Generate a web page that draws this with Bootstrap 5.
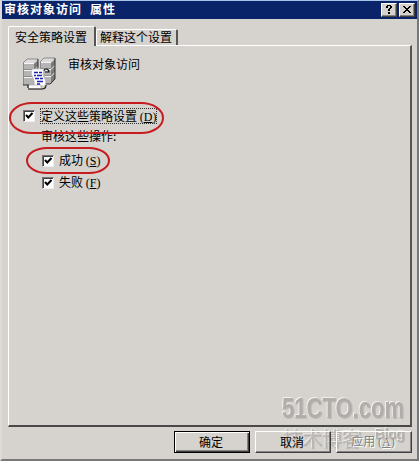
<!DOCTYPE html>
<html lang="zh-CN">
<head>
<meta charset="utf-8">
<title>审核对象访问 属性</title>
<link href="https://cdn.jsdelivr.net/npm/bootstrap@5.3.0/dist/css/bootstrap.min.css" rel="stylesheet">
<style>
body{margin:0;overflow:hidden;background:#d6d3ce;color:#000;font:12px/14px "Noto Sans CJK SC",sans-serif}
.dialog-window{width:419px;height:461px;background:#d6d3ce;border:solid;border-width:1px 2px 2px 2px;border-color:#a9c3e8 #777 #7b7978 #dedbd6;padding:0 1px}
.caption-bar{height:18px;background:#0a246a;color:#fff;font-weight:700;letter-spacing:1px;padding:0 2px 0 2px;margin:0 -1px}
.caption-text{margin-top:-2px}
.caption-btn{width:16px;height:14px;background:#d6d3ce;border:1px solid;border-color:#fff #404040 #404040 #fff;box-shadow:inset -1px -1px #848284;padding:0;margin-left:2px}
.caption-btn svg{display:block}
.tab-strip{height:19px;margin:7px 0 0 5px}
.sheet-tab{border:solid;border-width:1px 2px 0 1px;border-color:#fff #555 #555 #fff;border-radius:2px 2px 0 0;padding:0;background:#d6d3ce;color:#000}
.tab-on{width:88px;height:20px;padding:1px 0 1px 6px;z-index:2}
.tab-off{width:82px;height:16px;margin-top:3px;padding:0 0 1px 3px}
.sheet{width:404px;height:382px;margin-left:5px;border:solid;border-width:1px 2px 2px 1px;border-color:#fff #555 #4b484a #fff;padding:11px 0 0 14px}
.server-icon{width:34px;height:34px}
.heading-text{margin:0 0 0 11px}
.check-box{width:12px;height:12px;background:#fff;border:1px solid;border-color:#777 #eee #eee #777;box-shadow:inset 1px 1px #404040;flex:none}
.check-box svg{display:block}
.key{font-family:"Liberation Serif",serif;font-size:12px;white-space:nowrap}
.dotted{border:1px dotted #333;margin-left:-1px;height:16px;line-height:13px}
.policy-row{height:22px;gap:6px;align-items:center}
.first-row{margin-top:14px}
.policy-note{margin:2px 0 7px 18px;height:14px}
.sub-row{margin-left:19px}
.sub-row>span{margin:-1px 0 0 -1px}
.dlg-btn{width:76px;height:22px;background:transparent;border:1px solid;border-color:#fff #404040 #404040 #fff;box-shadow:inset -1px -1px #848284;color:#000;padding:0 2px 1px 0}
.dlg-default{border-color:#000;box-shadow:inset 1px 1px #fff,inset -1px -1px #404040,inset -2px -2px #848284}
.dlg-off{color:#848284;text-shadow:1px 1px #fff}
.footer-row{gap:5px;margin:4px 4px 0 0;z-index:3}
.overlay{left:0;top:0;pointer-events:none}
.marks{z-index:5}
.stamp{filter:drop-shadow(-1px -1px 0 #f1efec) drop-shadow(1px 1px 0 #bebbb8)}
</style>
<script src="https://cdn.jsdelivr.net/npm/bootstrap@5.3.0/dist/js/bootstrap.bundle.min.js"></script>
</head>
<body>
<main class="dialog-window position-relative">
  <header class="caption-bar d-flex align-items-center">
    <span class="caption-text me-auto">审核对象访问<span class="ms-2">属性</span></span>
    <button class="caption-btn" aria-label="帮助"><svg width="14" height="12" shape-rendering="crispEdges"><path d="M4 2h2v2H4zM5 1h4v1H5zM8 2h2v2H8zM7 4h2v1H7zM6 5h2v2H6zM6 8h2v2H6z"/></svg></button>
    <button class="caption-btn" aria-label="关闭"><svg width="14" height="12" shape-rendering="crispEdges"><path d="M3 2h2v1H3zM9 2h2v1H9zM4 3h2v1H4zM8 3h2v1H8zM5 4h4v1H5zM6 5h2v1H6zM5 6h4v1H5zM4 7h2v1H4zM8 7h2v1H8zM3 8h2v1H3zM9 8h2v1H9z"/></svg></button>
  </header>
  <nav class="tab-strip d-flex align-items-start">
    <button class="sheet-tab tab-on position-relative text-start">安全策略设置</button>
    <button class="sheet-tab tab-off text-start">解释这个设置</button>
  </nav>
  <section class="sheet">
    <div class="d-flex align-items-start">
      <svg class="server-icon" viewBox="0 0 34 34">
        <path d="M0 6h11v22H0zM17 5h11v22H17z" fill="#b5b3b3"/>
        <path d="M0 6l4-4h11l-4 4zM17 5l4-4h11l-4 4z" fill="#dddbdb"/>
        <path d="M11 6l4-4v20l-4 5zM28 5l4-4v21l-4 5z" fill="#7c7a7a"/>
        <path d="M0 6.5h11l4-4M0 13.5h11l4-4M0 20.5h9M17 5.5h11l4-4M17 12.5h11l4-4M22 19.5h6l4-4" stroke="#f5f5f5" fill="none"/>
        <path d="M0 12.5h11M0 19.5h9M17 11.5h11M22 18.5h6M.5 6v22M0 6l4-4h11M17 5l4-4h11M17.5 5v8" stroke="#8c8a8a" fill="none"/>
        <path d="M32 1v21l-5 5h-4M15 2v9M0 28h6" stroke="#333" fill="none"/>
        <path d="M9 12h14q2 0 2 2h-4q-2 2 0 6 3 5 1 9H11q1-4-1-8-3-5-1-9z" fill="#fff" stroke="#aaa" stroke-width=".6"/>
        <path d="M6 28h12q-1 2 1 4H6q-2-2 0-4z" fill="#fff" stroke="#999" stroke-width=".6"/>
        <path d="M21 14q0-2 2-2 3 0 3 3h-4M5 32h14q4 0 4-4M5 28v3" fill="none" stroke="#111" stroke-width="1.1"/>
        <path d="M11 15.5h4M16 15.5h3M11 18.5h2M14 18.5h5M12 21.5h4M17 21.5h3M14 24.5h6M14 27h3" stroke="#1d20b8" stroke-width="1.3" fill="none"/>
      </svg>
      <span class="heading-text">审核对象访问</span>
    </div>
    <div>
      <label class="policy-row first-row d-flex"><i class="check-box"><svg width="10" height="10"><path d="M2 4l2.3 2.5L8.5 2" fill="none" stroke="#000" stroke-width="2"/></svg></i><span class="dotted">定义这些策略设置 <span class="key">(<u>D</u>)</span></span></label>
      <div class="policy-note">审核这些操作:</div>
      <label class="policy-row sub-row d-flex"><i class="check-box"><svg width="10" height="10"><path d="M2 4l2.3 2.5L8.5 2" fill="none" stroke="#000" stroke-width="2"/></svg></i><span>成功 <span class="key">(<u>S</u>)</span></span></label>
      <label class="policy-row sub-row d-flex"><i class="check-box"><svg width="10" height="10"><path d="M2 4l2.3 2.5L8.5 2" fill="none" stroke="#000" stroke-width="2"/></svg></i><span>失败 <span class="key">(<u>F</u>)</span></span></label>
    </div>
  </section>
  <footer class="footer-row position-relative d-flex justify-content-end">
    <button class="dlg-btn dlg-default">确定</button>
    <button class="dlg-btn">取消</button>
    <button class="dlg-btn dlg-off">应用 <span class="key">(<u>A</u>)</span></button>
  </footer>
  <svg class="overlay position-absolute" width="415" height="458">
    <g class="stamp" font-family="Liberation Sans,sans-serif" font-weight="700" fill="#b0adaa">
      <text x="280" y="417" font-size="29" textLength="122" lengthAdjust="spacingAndGlyphs">51CTO.com</text>
      <text x="281" y="446" font-size="20" font-weight="400" opacity=".75" font-family="Noto Sans CJK SC,sans-serif" textLength="79">技术博客</text>
      <text x="373" y="438" font-size="14" opacity=".9" textLength="30">Blog</text>
    </g>
  </svg>
  <svg class="overlay marks position-absolute" width="415" height="458">
    <g fill="none" stroke="#c61c20" stroke-width="2"><rect x="8" y="102" width="153" height="30" rx="22" ry="15"/><rect x="25" y="147" width="82" height="25" rx="20" ry="12.5"/></g>
  </svg>
</main>
</body>
</html>
